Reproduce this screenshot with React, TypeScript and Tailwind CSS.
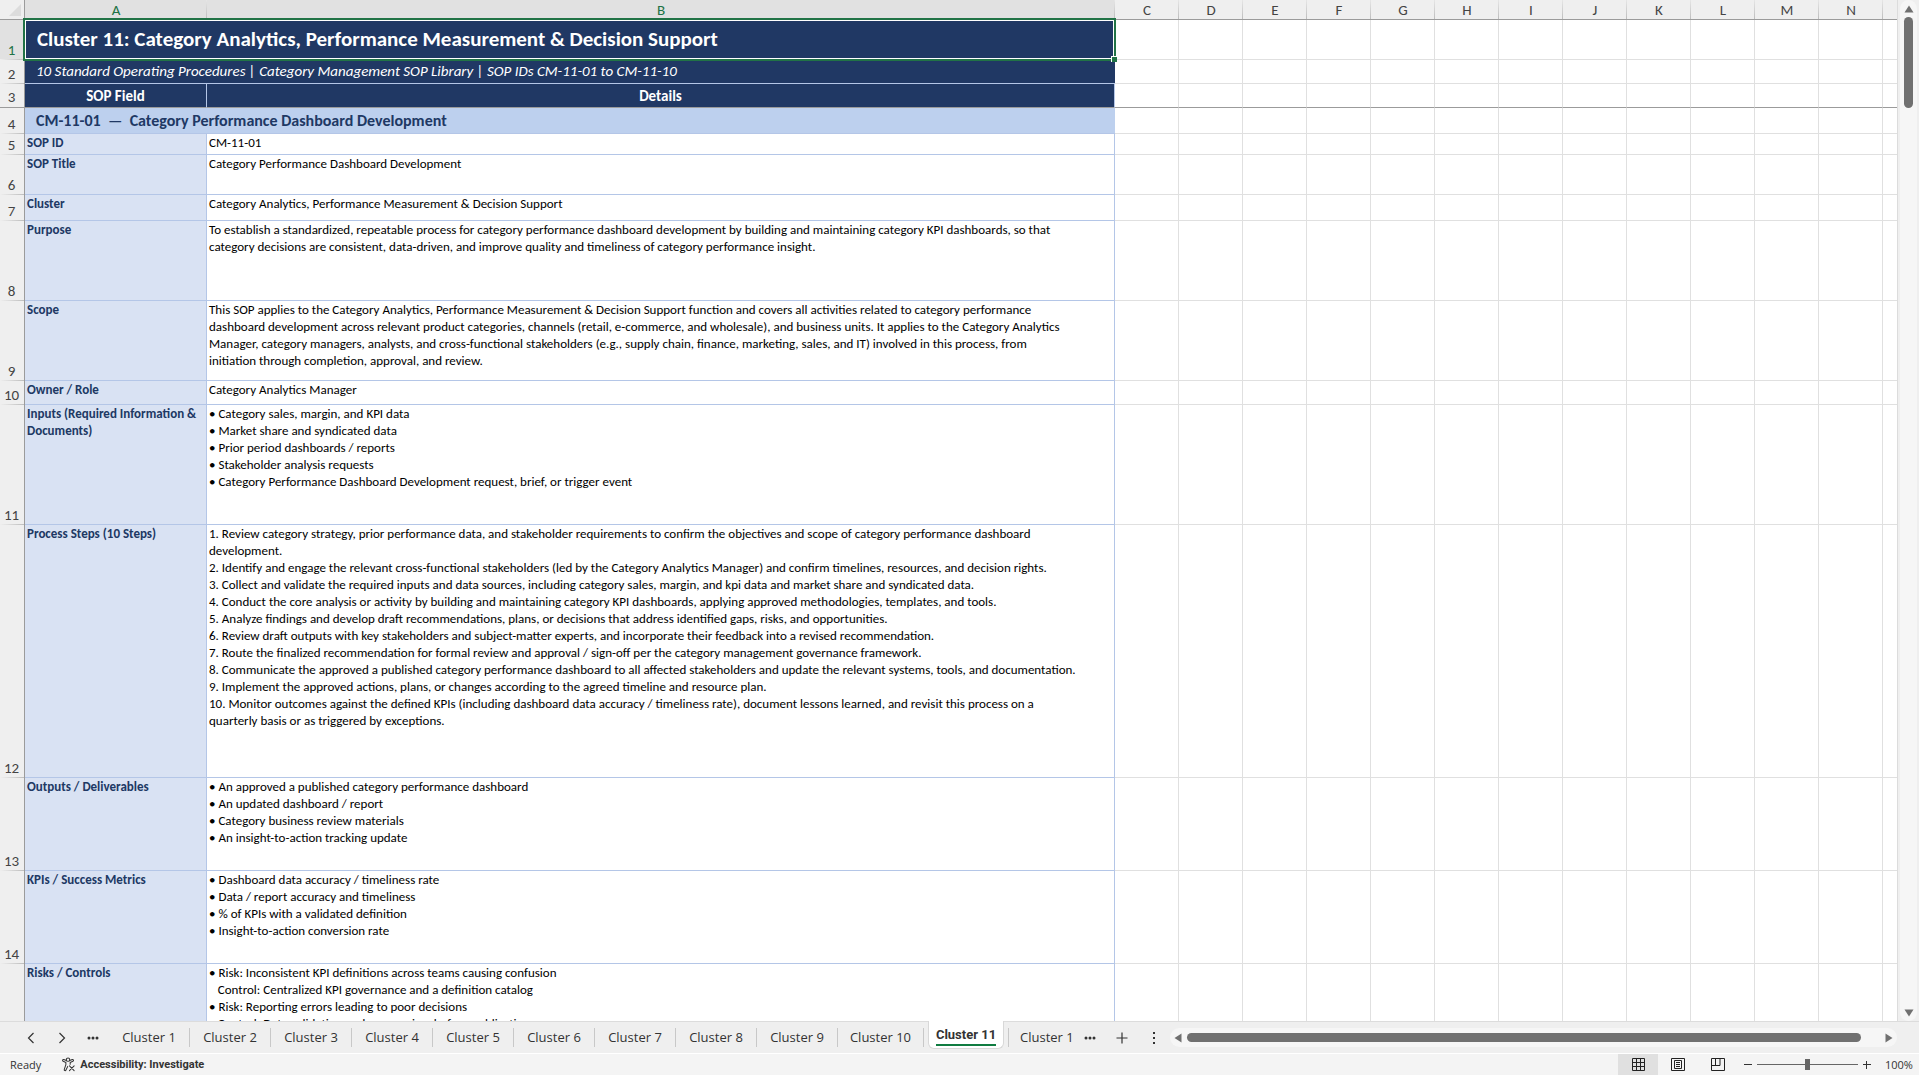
import type { ReactNode } from "react";

type SheetRow = { n: number; height: string; label: string[]; lines: string[] };

const LETTERS = ["C", "D", "E", "F", "G", "H", "I", "J", "K", "L", "M", "N"];

const ROWS: SheetRow[] = [
  { n: 5, height: "h-[21px]", label: ["SOP ID"], lines: ["CM-11-01"] },
  { n: 6, height: "h-10", label: ["SOP Title"], lines: ["Category Performance Dashboard Development"] },
  { n: 7, height: "h-[26px]", label: ["Cluster"], lines: ["Category Analytics, Performance Measurement & Decision Support"] },
  {
    n: 8,
    height: "h-20",
    label: ["Purpose"],
    lines: [
      "To establish a standardized, repeatable process for category performance dashboard development by building and maintaining category KPI dashboards, so that",
      "category decisions are consistent, data-driven, and improve quality and timeliness of category performance insight.",
    ],
  },
  {
    n: 9,
    height: "h-20",
    label: ["Scope"],
    lines: [
      "This SOP applies to the Category Analytics, Performance Measurement & Decision Support function and covers all activities related to category performance",
      "dashboard development across relevant product categories, channels (retail, e-commerce, and wholesale), and business units. It applies to the Category Analytics",
      "Manager, category managers, analysts, and cross-functional stakeholders (e.g., supply chain, finance, marketing, sales, and IT) involved in this process, from",
      "initiation through completion, approval, and review.",
    ],
  },
  { n: 10, height: "h-6", label: ["Owner / Role"], lines: ["Category Analytics Manager"] },
  {
    n: 11,
    height: "h-[120px]",
    label: ["Inputs (Required Information &", "Documents)"],
    lines: [
      "• Category sales, margin, and KPI data",
      "• Market share and syndicated data",
      "• Prior period dashboards / reports",
      "• Stakeholder analysis requests",
      "• Category Performance Dashboard Development request, brief, or trigger event",
    ],
  },
  {
    n: 12,
    height: "h-[253px]",
    label: ["Process Steps (10 Steps)"],
    lines: [
      "1. Review category strategy, prior performance data, and stakeholder requirements to confirm the objectives and scope of category performance dashboard",
      "development.",
      "2. Identify and engage the relevant cross-functional stakeholders (led by the Category Analytics Manager) and confirm timelines, resources, and decision rights.",
      "3. Collect and validate the required inputs and data sources, including category sales, margin, and kpi data and market share and syndicated data.",
      "4. Conduct the core analysis or activity by building and maintaining category KPI dashboards, applying approved methodologies, templates, and tools.",
      "5. Analyze findings and develop draft recommendations, plans, or decisions that address identified gaps, risks, and opportunities.",
      "6. Review draft outputs with key stakeholders and subject-matter experts, and incorporate their feedback into a revised recommendation.",
      "7. Route the finalized recommendation for formal review and approval / sign-off per the category management governance framework.",
      "8. Communicate the approved a published category performance dashboard to all affected stakeholders and update the relevant systems, tools, and documentation.",
      "9. Implement the approved actions, plans, or changes according to the agreed timeline and resource plan.",
      "10. Monitor outcomes against the defined KPIs (including dashboard data accuracy / timeliness rate), document lessons learned, and revisit this process on a",
      "quarterly basis or as triggered by exceptions.",
    ],
  },
  {
    n: 13,
    height: "h-[93px]",
    label: ["Outputs / Deliverables"],
    lines: [
      "• An approved a published category performance dashboard",
      "• An updated dashboard / report",
      "• Category business review materials",
      "• An insight-to-action tracking update",
    ],
  },
  {
    n: 14,
    height: "h-[93px]",
    label: ["KPIs / Success Metrics"],
    lines: [
      "• Dashboard data accuracy / timeliness rate",
      "• Data / report accuracy and timeliness",
      "• % of KPIs with a validated definition",
      "• Insight-to-action conversion rate",
    ],
  },
  {
    n: 15,
    height: "h-40",
    label: ["Risks / Controls"],
    lines: [
      "• Risk: Inconsistent KPI definitions across teams causing confusion",
      "   Control: Centralized KPI governance and a definition catalog",
      "• Risk: Reporting errors leading to poor decisions",
      "   Control: Data validation and peer review before publication",
    ],
  },
];

const TABS = [1, 2, 3, 4, 5, 6, 7, 8, 9];

function ColumnHead({ children, selected, last }: { children?: ReactNode; selected?: boolean; last?: boolean }) {
  return (
    <th
      scope="col"
      className={
        "h-5 border-b border-[#9b9b9b] bg-right bg-no-repeat p-0 align-bottom text-[15px] leading-[18px] font-normal " +
        (last ? "" : "bg-[linear-gradient(to_bottom,#e6e6e6,#bdbdbd)] bg-[length:1px_100%] ") +
        (selected ? "bg-[#e1e1e1] text-[#217346]" : "bg-[#efefef] text-[#444444]")
      }
    >
      {children}
    </th>
  );
}

function RowHead({ n, selected, frozen }: { n: number; selected?: boolean; frozen?: boolean }) {
  return (
    <th
      scope="row"
      className={
        "border-r border-[#9b9b9b] p-0 pr-px pb-px align-bottom text-[15px] leading-[18px] font-normal " +
        (frozen
          ? "border-b "
          : "bg-[linear-gradient(to_right,#efefef,#bdbdbd)] bg-[length:100%_1px] bg-bottom bg-no-repeat ") +
        (selected ? "bg-[#e1e1e1] text-[#217346]" : "bg-[#efefef] text-[#444444]")
      }
    >
      {n}
    </th>
  );
}

function BlankCells({ frozen }: { frozen?: boolean }) {
  return (
    <>
      {LETTERS.map((l) => (
        <td key={l} className={"border-r border-b border-r-[#e0e0e0] " + (frozen ? "border-b-[#9b9b9b]" : "border-b-[#e0e0e0]")} />
      ))}
      <td className={"border-b " + (frozen ? "border-b-[#9b9b9b]" : "border-b-[#e0e0e0]")} />
    </>
  );
}

function Sheet() {
  return (
    <table className="w-full table-fixed border-separate border-spacing-0 font-[Carlito,Calibri,Lato,sans-serif]">
      <colgroup>
        <col className="w-[25px]" />
        <col className="w-[182px]" />
        <col className="w-[908px]" />
        {LETTERS.map((l) => (
          <col key={l} className="w-16" />
        ))}
        <col />
      </colgroup>
      <thead>
        <tr>
          <th className="border-r border-b border-[#9b9b9b] bg-[#efefef] p-0">
            <button aria-label="Select all cells" className="block h-[19px] w-6">
              <svg viewBox="0 0 24 19" className="h-[19px] w-6" aria-hidden="true">
                <path d="M21 4v12H9z" fill="#dcdcdc" />
              </svg>
            </button>
          </th>
          <ColumnHead selected>A</ColumnHead>
          <ColumnHead selected>B</ColumnHead>
          {LETTERS.map((l) => (
            <ColumnHead key={l}>{l}</ColumnHead>
          ))}
          <ColumnHead last />
        </tr>
      </thead>
      <tbody>
        <tr className="h-10">
          <RowHead n={1} selected />
          <td colSpan={2} className="relative bg-[#203864] p-0 pb-0.5 pl-3 text-[21px] leading-7 font-bold whitespace-nowrap text-white">
            Cluster 11: Category Analytics, Performance Measurement &amp; Decision Support
            <span className="pointer-events-none absolute -top-0.5 -right-px -bottom-px -left-0.5 border-2 border-[#217346]">
              <span className="block size-full border border-white" />
            </span>
            <span className="absolute -right-0.5 -bottom-0.5 size-1.5 border-t border-l border-white bg-[#217346]" />
          </td>
          <BlankCells />
        </tr>
        <tr className="h-6">
          <RowHead n={2} />
          <td colSpan={2} className="border-b border-[#b4c6e7] bg-[#203864] p-0 pb-0.5 pl-[11px] text-[15px] leading-5 whitespace-nowrap text-white italic">
            10 Standard Operating Procedures | Category Management SOP Library | SOP IDs CM-11-01 to CM-11-10
          </td>
          <BlankCells />
        </tr>
        <tr className="h-6">
          <RowHead n={3} frozen />
          <td className="border-r border-b border-r-[#b4c6e7] border-b-[#9b9b9b] bg-[#203864] p-0 text-center text-[15px] leading-5 font-bold text-white">
            SOP Field
          </td>
          <td className="border-r border-b border-r-[#b4c6e7] border-b-[#9b9b9b] bg-[#203864] p-0 text-center text-[15px] leading-5 font-bold text-white">
            Details
          </td>
          <BlankCells frozen />
        </tr>
        <tr className="h-[26px]">
          <RowHead n={4} />
          <td colSpan={2} className="border-b border-[#b4c6e7] bg-[#bdd0ee] p-0 pl-[11px] text-[16px] leading-5 font-bold whitespace-pre text-[#203864]">
            {"CM-11-01  —  Category Performance Dashboard Development"}
          </td>
          <BlankCells />
        </tr>
        {ROWS.map((row) => (
          <tr key={row.n} className={row.height}>
            <RowHead n={row.n} />
            <td className="border-r border-b border-[#b4c6e7] bg-[#d9e2f3] p-0 pl-0.5 align-top text-[13px] leading-[17px] font-bold whitespace-nowrap text-[#203864]">
              {row.label.map((line) => (
                <p key={line}>{line}</p>
              ))}
            </td>
            <td className="border-r border-b border-[#b4c6e7] p-0 pl-0.5 align-top text-[13px] leading-[17px] whitespace-pre text-black">
              {row.lines.map((line) => (
                <p key={line}>{line}</p>
              ))}
            </td>
            <BlankCells />
          </tr>
        ))}
      </tbody>
    </table>
  );
}

function VerticalScroll() {
  return (
    <div className="flex w-[21px] shrink-0 justify-center bg-[#efefef]">
      <div className="flex w-[17px] flex-col items-center rounded-full bg-[#f6f6f6]">
        <button aria-label="Scroll up" className="flex h-[17px] w-full items-center justify-center">
          <svg viewBox="0 0 10 8" className="h-2 w-2.5" aria-hidden="true">
            <path d="M5 .5 9.5 7.5H.5z" fill="#707070" />
          </svg>
        </button>
        <div className="h-[91px] w-[9px] rounded-full bg-[#707070]" />
        <div className="flex-1" />
        <button aria-label="Scroll down" className="flex h-4 w-full items-center justify-center">
          <svg viewBox="0 0 10 8" className="h-2 w-2.5" aria-hidden="true">
            <path d="M5 7.5 9.5.5H.5z" fill="#707070" />
          </svg>
        </button>
      </div>
    </div>
  );
}

function Dots() {
  return (
    <svg viewBox="0 0 12 4" className="h-1 w-3" aria-hidden="true" fill="#333">
      <circle cx="2" cy="2" r="1.5" />
      <circle cx="6" cy="2" r="1.5" />
      <circle cx="10" cy="2" r="1.5" />
    </svg>
  );
}

function SheetTabs() {
  return (
    <div className="flex h-8 shrink-0 items-stretch border-t border-[#dcdcdc] bg-[#efefef] text-[13px] text-[#333333]">
      <div className="flex w-[109px] shrink-0 items-center pl-[15px]">
        <button aria-label="Previous sheets" className="flex h-6 w-8 items-center justify-center">
          <svg viewBox="0 0 8 12" className="h-3 w-2" fill="none" stroke="#333" strokeWidth="1.2" aria-hidden="true">
            <path d="M6.500 1 1.500 6l5 5" />
          </svg>
        </button>
        <button aria-label="Next sheets" className="flex h-6 w-8 items-center justify-center">
          <svg viewBox="0 0 8 12" className="h-3 w-2" fill="none" stroke="#333" strokeWidth="1.2" aria-hidden="true">
            <path d="m1.500 1 5 5-5 5" />
          </svg>
        </button>
        <button aria-label="More sheets on the left" className="flex h-6 w-8 items-center justify-center">
          <Dots />
        </button>
      </div>
      {TABS.map((n) => (
        <button key={n} className="my-1.5 w-[81px] shrink-0 border-r border-[#c8c8c8] pb-0.5 leading-4">
          Cluster {n}
        </button>
      ))}
      <button className="my-1.5 w-[86px] shrink-0 border-r border-[#c8c8c8] pb-0.5 leading-4">Cluster 10</button>
      <button
        aria-current="page"
        className="mx-1 -mt-px mb-1 flex w-[76px] shrink-0 flex-col items-center rounded-b-md border border-t-0 border-[#d8d8d8] bg-white pt-1.5 font-[Roboto,sans-serif] text-[13px] leading-4 font-bold"
      >
        <span className="border-b-2 border-[#107c41] pb-px">Cluster 11</span>
      </button>
      <button className="my-1.5 shrink-0 border-l border-[#c8c8c8] pb-0.5 pl-[11px] leading-4">Cluster 1</button>
      <button aria-label="More sheets on the right" className="flex w-8 shrink-0 items-center justify-center">
        <Dots />
      </button>
      <button aria-label="New sheet" className="flex w-8 shrink-0 items-center justify-center">
        <svg viewBox="0 0 12 12" className="size-3" stroke="#333" strokeWidth="1.200" aria-hidden="true">
          <path d="M6 .5v11M.5 6h11" />
        </svg>
      </button>
      <div className="flex w-8 shrink-0 items-center justify-center">
        <svg viewBox="0 0 2 12" className="h-3 w-0.5" fill="#333" aria-hidden="true">
          <path d="M0 0h2v2H0zM0 5h2v2H0zM0 10h2v2H0z" />
        </svg>
      </div>
      <div className="my-1.5 mr-[22px] flex flex-1 items-center rounded-full bg-[#f6f6f6]">
        <button aria-label="Scroll left" className="flex h-full w-[17px] items-center justify-center">
          <svg viewBox="0 0 8 10" className="h-2.5 w-2" aria-hidden="true">
            <path d="M.5 5 7.500.5v9z" fill="#707070" />
          </svg>
        </button>
        <div className="h-[9px] flex-1 rounded-full bg-[#707070]" />
        <button aria-label="Scroll right" className="ml-[19px] flex h-full w-[17px] items-center justify-center">
          <svg viewBox="0 0 8 10" className="h-2.5 w-2" aria-hidden="true">
            <path d="M7.500 5 .5.5v9z" fill="#707070" />
          </svg>
        </button>
      </div>
    </div>
  );
}

function StatusBar() {
  return (
    <div className="flex h-[22px] shrink-0 items-stretch border-t border-white bg-[#f4f4f4] text-[11px] leading-4 text-[#333333]">
      <span className="self-center pl-2.5">Ready</span>
      <button className="ml-5 flex items-center gap-1 font-[Roboto,sans-serif] font-bold">
        <svg viewBox="0 0 16 16" className="size-[15px]" fill="none" stroke="#333" strokeWidth="1.100" strokeLinecap="round" strokeLinejoin="round" aria-hidden="true">
          <circle cx="7.500" cy="2.800" r="1.800" />
          <path d="M5.700 3.700 3 2.700c-1.300-.4-1.900 1.400-.7 1.900l2.900 1.200v2.400l-1.700 5c-.4 1.300 1.300 1.900 1.800.7L7.200 10" />
          <path d="M9.300 3.700 12 2.700c1.300-.4 1.900 1.400.7 1.900L9.800 5.800v2" />
          <path d="m9 9.500 5 5M14 9.500l-5 5" />
        </svg>
        Accessibility: Investigate
      </button>
      <div className="flex-1" />
      <button aria-label="Normal view" aria-pressed="true" className="flex w-10 items-center justify-center bg-[#e0e0e0]">
        <svg viewBox="0 0 13 13" className="size-[13px]" fill="none" stroke="#222" aria-hidden="true">
          <path d="M.5.5h12v12H.5zM4.500.5v12M8.500.5v12M.5 4.500h12M.5 8.500h12" />
        </svg>
      </button>
      <button aria-label="Page layout view" className="flex w-10 items-center justify-center">
        <svg viewBox="0 0 14 13" className="h-[13px] w-3.5" fill="none" stroke="#222" aria-hidden="true">
          <path d="M.5.5h13v12H.5zM3.500 2.500h7v8h-7zM5 4.500h4M5 6.500h4M5 8.500h4" />
        </svg>
      </button>
      <button aria-label="Page break preview" className="flex w-10 items-center justify-center">
        <svg viewBox="0 0 14 13" className="h-[13px] w-3.5" fill="none" stroke="#222" aria-hidden="true">
          <path d="M.5.5h13v12H.5zM4.500.5v7M.5 7.500h8.500v-7" />
        </svg>
      </button>
      <button aria-label="Zoom out" className="flex w-3.5 items-center justify-end">
        <svg viewBox="0 0 8 8" className="size-2" stroke="#333" aria-hidden="true">
          <path d="M0 3.500h8" />
        </svg>
      </button>
      <input
        type="range"
        min={0}
        max={100}
        defaultValue={50}
        aria-label="Zoom level"
        className="mx-[5px] h-full w-[101px] appearance-none bg-transparent [&::-webkit-slider-runnable-track]:h-px [&::-webkit-slider-runnable-track]:bg-[#666666] [&::-webkit-slider-thumb]:-mt-[5px] [&::-webkit-slider-thumb]:h-[11px] [&::-webkit-slider-thumb]:w-[5px] [&::-webkit-slider-thumb]:appearance-none [&::-webkit-slider-thumb]:bg-[#666666]"
      />
      <button aria-label="Zoom in" className="flex items-center">
        <svg viewBox="0 0 8 8" className="size-2" stroke="#333" aria-hidden="true">
          <path d="M0 3.500h8M3.500 0v8" />
        </svg>
      </button>
      <button className="ml-3.5 w-[34px] text-left">100%</button>
    </div>
  );
}

export default function App() {
  return (
    <div className="flex h-screen flex-col overflow-hidden bg-[#efefef] font-['Open_Sans','Noto_Sans',sans-serif]">
      <main className="flex min-h-0 flex-1">
        <div className="min-w-0 flex-1 overflow-hidden border-r border-[#dcdcdc] bg-white">
          <Sheet />
        </div>
        <VerticalScroll />
      </main>
      <SheetTabs />
      <StatusBar />
    </div>
  );
}
